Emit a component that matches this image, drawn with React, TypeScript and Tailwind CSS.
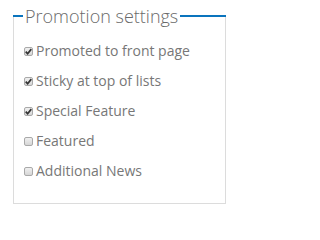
import React from "react";

const items: { label: string; checked: boolean }[] = [
  { label: "Promoted to front page", checked: true },
  { label: "Sticky at top of lists", checked: true },
  { label: "Special Feature", checked: true },
  { label: "Featured", checked: false },
  { label: "Additional News", checked: false },
];

function Box({ checked }: { checked: boolean }) {
  return (
    <span className="flex h-[9px] w-[9px] shrink-0 items-center justify-center rounded-[2px] border border-[#a9a9a9] bg-gradient-to-b from-[#f0f0f0] to-[#d6d6d6]">
      {checked && (
        <svg width="7" height="7" viewBox="0 0 7 7" className="block">
          <path d="M0.7 3.7 L2.6 5.7 L6.3 1.1" fill="none" stroke="#333" strokeWidth="1.7" />
        </svg>
      )}
    </span>
  );
}

export default function App() {
  return (
    <div className="h-[217px] w-[238px] bg-white font-['Open_Sans',sans-serif]">
      <div className="ml-[13px] w-[213px]">
        <div className="flex h-[17px] items-start">
          <div className="mt-[15px] h-[2px] w-[10px] bg-[#0a74bd]" />
          <span className="mt-[7px] px-[2px] text-[18px] font-light leading-[18px] text-[#6a6a6a] whitespace-nowrap">
            Promotion settings
          </span>
          <div className="mt-[15px] h-[2px] flex-1 bg-[#0a74bd]" />
        </div>
        <div className="flex flex-col gap-[10px] border-x border-b border-[#dcdcdc] pb-[22px] pl-[10px] pt-[24px]">
          {items.map((it) => (
            <label key={it.label} className="flex h-[20px] items-center gap-[3px] text-[14px] leading-[20px] text-[#777]">
              <Box checked={it.checked} />
              <span className="whitespace-nowrap">{it.label}</span>
            </label>
          ))}
        </div>
      </div>
    </div>
  );
}
